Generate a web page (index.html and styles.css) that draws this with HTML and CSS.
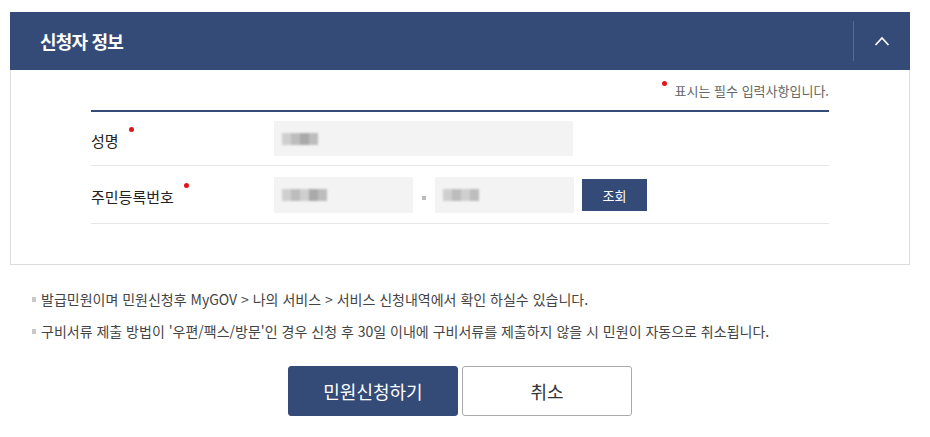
FILE: index.html
```html
<!DOCTYPE html>
<html lang="ko">

<head>
    <meta charset="UTF-8">
    <meta name="viewport" content="width=device-width, initial-scale=1.0">
    <title>신청자 정보</title>
    <link rel="stylesheet" href="styles.css">
</head>

<body>
    <div class="wrap">
        <div class="panel">
            <div class="panel-head">
                <h3>신청자 정보</h3>
                <button class="toggle" type="button" aria-label="접기">
                    <svg width="16" height="10" viewBox="0 0 16 10">
                        <polyline points="1.5,9 8,2 14.5,9" fill="none" stroke="#fff" stroke-width="1.6" />
                    </svg>
                </button>
            </div>
            <div class="panel-body">
                <p class="req-note"><span class="req"></span>표시는 필수 입력사항입니다.</p>
                <div class="form-table">
                    <div class="row">
                        <div class="label">성명<span class="req"></span></div>
                        <div class="field">
                            <div class="input wide">
                                <span class="blur">
                                    <i class="b1"></i><i class="b2"></i><i class="b3"></i><i class="b2"></i>
                                </span>
                            </div>
                        </div>
                    </div>
                    <div class="row tall">
                        <div class="label">주민등록번호<span class="req"></span></div>
                        <div class="field">
                            <div class="input half">
                                <span class="blur">
                                    <i class="b1"></i><i class="b2"></i><i class="b1"></i><i class="b3"></i><i class="b2"></i>
                                </span>
                            </div>
                            <span class="sep"></span>
                            <div class="input half">
                                <span class="blur">
                                    <i class="b1"></i><i class="b2"></i><i class="b1"></i><i class="b2"></i>
                                </span>
                            </div>
                            <button class="btn-search" type="button">조회</button>
                        </div>
                    </div>
                </div>
            </div>
        </div>

        <ul class="notes">
            <li>발급민원이며 민원신청후 MyGOV &gt; 나의 서비스 &gt; 서비스 신청내역에서 확인 하실수 있습니다.</li>
            <li>구비서류 제출 방법이 '우편/팩스/방문'인 경우 신청 후 30일 이내에 구비서류를 제출하지 않을 시 민원이 자동으로 취소됩니다.</li>
        </ul>

        <div class="actions">
            <button class="btn primary" type="button">민원신청하기</button>
            <button class="btn" type="button">취소</button>
        </div>
    </div>
</body>

</html>
```

FILE: styles.css
```css
* {
    box-sizing: border-box;
}

body {
    margin: 0;
    font-family: "Noto Sans CJK KR", "Noto Sans", sans-serif;
    color: #222;
    background: #fff;
}

.wrap {
    padding: 12px 20px 0 10px;
}

.panel {
    border: 1px solid #dcdcdc;
    border-top: 0;
}

.panel-head {
    display: flex;
    align-items: center;
    height: 58px;
    margin: 0 -1px;
    padding-left: 30px;
    background: #344b77;
}

.panel-head h3 {
    flex: 1;
    margin: 0;
    color: #fff;
    font-size: 18px;
    font-weight: 700;
    letter-spacing: -0.8px;
}

.toggle {
    display: flex;
    align-items: center;
    justify-content: center;
    width: 57px;
    height: 40px;
    padding: 0;
    border: 0;
    border-left: 1px solid rgba(255, 255, 255, .18);
    background: transparent;
}

.panel-body {
    padding: 11px 80px 40px 80px;
}

.req-note {
    margin: 0 0 10px;
    text-align: right;
    font-size: 13px;
    line-height: 18px;
    color: #666;
}

.req {
    display: inline-block;
    width: 5px;
    height: 5px;
    margin: 0 8px 0 0;
    border-radius: 50%;
    background: #e0161b;
    vertical-align: 10px;
}

.label .req {
    margin: 0 0 0 10px;
    vertical-align: 15px;
}

.form-table {
    border-top: 2px solid #344b77;
}

.row {
    display: flex;
    align-items: center;
    padding: 9px 0;
    border-bottom: 1px solid #e6e6e6;
}

.row.tall {
    padding: 11px 0 10px;
}

.label {
    width: 183px;
    font-size: 15px;
}

.field {
    display: flex;
    align-items: center;
}

.input {
    display: flex;
    align-items: center;
    height: 35px;
    padding-left: 8px;
    background: #f3f3f3;
}

.row.tall .input {
    height: 36px;
}

.input.wide {
    width: 299px;
}

.input.half {
    width: 139px;
}

.blur {
    display: flex;
    filter: blur(1.2px);
}

.blur i {
    display: block;
    width: 9px;
    height: 12px;
}

.blur .b1 {
    background: #cfcfcf;
}

.blur .b2 {
    background: #bdbdbd;
}

.blur .b3 {
    background: #a9a9a9;
}

.sep {
    display: block;
    width: 4px;
    height: 4px;
    margin: 6px 9px 0 9px;
    background: #bbb;
}

.btn-search {
    width: 65px;
    height: 32px;
    margin-left: 8px;
    border: 0;
    background: #344b77;
    color: #fff;
    font-family: inherit;
    font-size: 13px;
}

.notes {
    margin: 24px 0 0;
    padding: 0 0 0 22px;
    list-style: none;
}

.notes li {
    position: relative;
    padding-left: 9px;
    margin-bottom: 12px;
    font-size: 14px;
    line-height: 20px;
    color: #444;
}

.notes li::before {
    content: "";
    position: absolute;
    left: 0;
    top: 8px;
    width: 4px;
    height: 5px;
    background: #c8c8c8;
}

.actions {
    display: flex;
    justify-content: center;
    gap: 4px;
    margin-top: 25px;
}

.btn {
    width: 170px;
    height: 50px;
    border: 1px solid #aaa;
    border-radius: 3px;
    background: #fff;
    color: #333;
    font-family: inherit;
    font-size: 18px;
}

.btn.primary {
    border-color: #344b77;
    background: #344b77;
    color: #fff;
}
```
